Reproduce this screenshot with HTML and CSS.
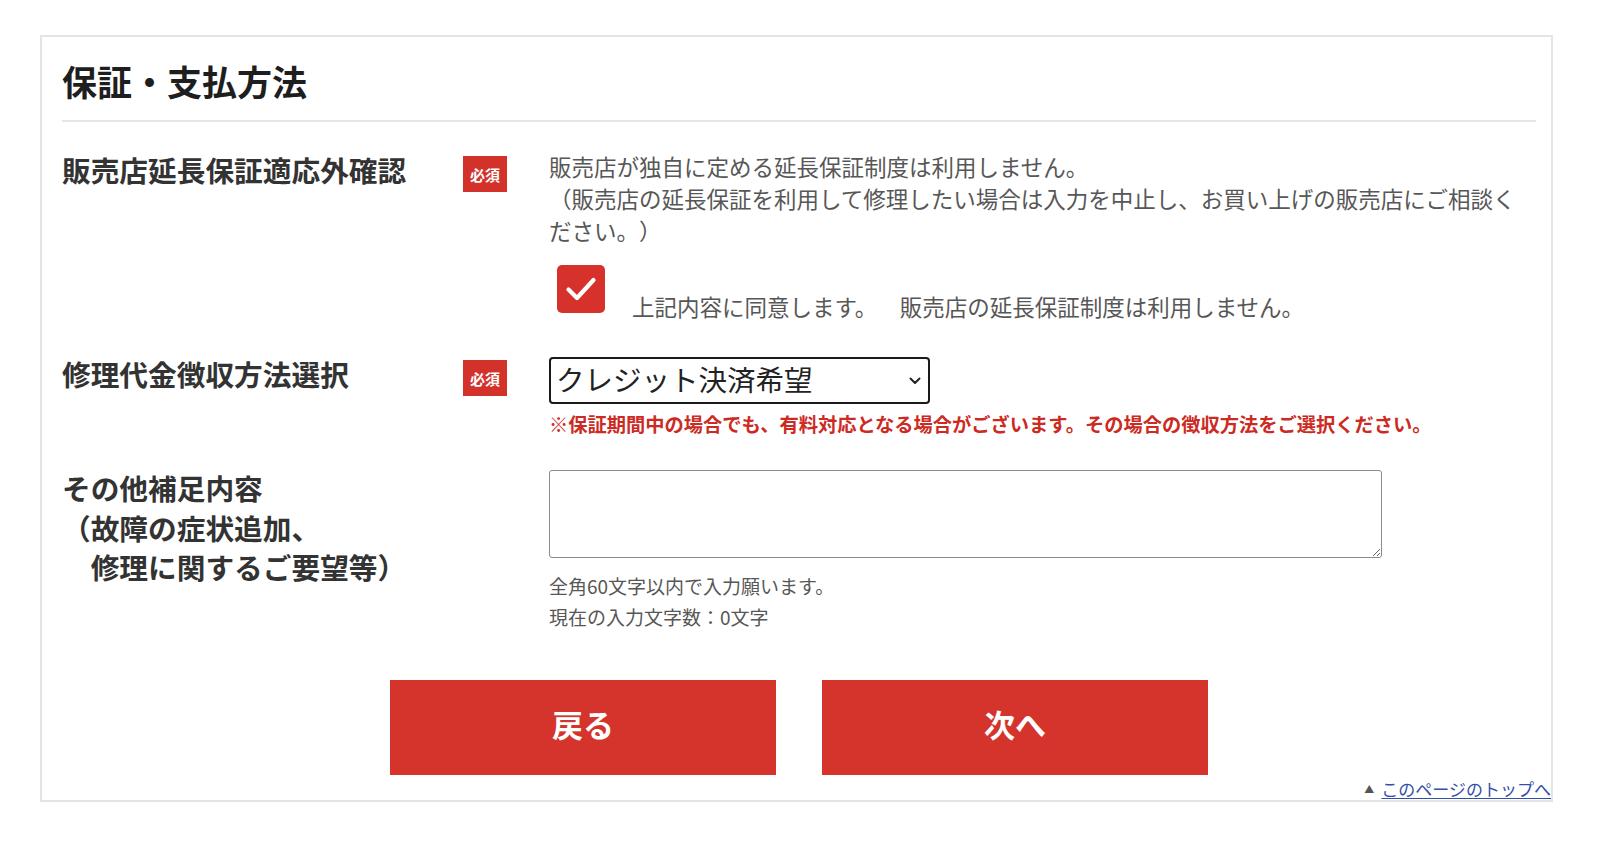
FILE: index.html
```html
<!DOCTYPE html>
<html lang="ja">
<head>
<meta charset="utf-8">
<title>保証・支払方法</title>
<link rel="stylesheet" href="styles.css">
</head>
<body>
<section class="panel">
  <h2 class="panel-title">保証・支払方法</h2>

  <div class="form-row row-warranty">
    <div class="label">販売店延長保証適応外確認</div>
    <div class="badge-cell"><span class="badge">必須</span></div>
    <div class="field">
      <p class="desc">販売店が独自に定める延長保証制度は利用しません。<br>（販売店の延長保証を利用して修理したい場合は入力を中止し、お買い上げの販売店にご相談ください。）</p>
      <label class="agree">
        <span class="checkbox">
          <svg viewBox="0 0 48 48" width="48" height="48" aria-hidden="true">
            <path d="M11.5 24.5 L20 33 L36.5 15" fill="none" stroke="#fff" stroke-width="4.2" stroke-linecap="round" stroke-linejoin="round"/>
          </svg>
        </span>
        <span class="agree-text">上記内容に同意します。　販売店の延長保証制度は利用しません。</span>
      </label>
    </div>
  </div>

  <div class="form-row row-payment">
    <div class="label">修理代金徴収方法選択</div>
    <div class="badge-cell"><span class="badge">必須</span></div>
    <div class="field">
      <div class="select-wrap">
        <select class="select">
          <option>クレジット決済希望</option>
        </select>
        <svg class="select-arrow" viewBox="0 0 12 8" width="12" height="8" aria-hidden="true">
          <path d="M1.5 1.5 L6 6 L10.5 1.5" fill="none" stroke="#222" stroke-width="2" stroke-linecap="round" stroke-linejoin="round"/>
        </svg>
      </div>
      <p class="note">※保証期間中の場合でも、有料対応となる場合がございます。その場合の徴収方法をご選択ください。</p>
    </div>
  </div>

  <div class="form-row row-other">
    <div class="label">その他補足内容<br>（故障の症状追加、<br>　修理に関するご要望等）</div>
    <div class="badge-cell"></div>
    <div class="field">
      <textarea class="textarea"></textarea>
      <p class="hint">全角60文字以内で入力願います。<br>現在の入力文字数：0文字</p>
    </div>
  </div>

  <div class="actions">
    <button class="btn" type="button">戻る</button>
    <button class="btn" type="button">次へ</button>
  </div>

  <div class="pagetop"><span class="pagetop-mark">▲</span><a class="pagetop-link" href="#">このページのトップへ</a></div>
</section>
</body>
</html>
```

FILE: styles.css
```css
* {
  box-sizing: border-box;
}

html, body {
  margin: 0;
  padding: 0;
  background: #ffffff;
}

body {
  font-family: "Noto Sans CJK JP", "Noto Sans", "Liberation Sans", sans-serif;
  color: #333333;
  text-spacing-trim: space-all;
}

.panel {
  width: 1513px;
  margin: 35px 0 0 40px;
  border: 2px solid #e3e3e8;
  padding: 20px 15px 0 20px;
}

.panel-title {
  margin: 0;
  padding: 0 0 15px 0;
  font-size: 35px;
  line-height: 48px;
  font-weight: 700;
  color: #1e1e1e;
  border-bottom: 2px solid #e6e6ea;
}

.form-row {
  display: grid;
  grid-template-columns: 401px 86px 1fr;
  align-items: start;
}

.row-warranty {
  margin-top: 28px;
}

.row-payment {
  margin-top: 32px;
}

.row-other {
  margin-top: 30px;
}

.label {
  font-size: 28.7px;
  line-height: 39.5px;
  font-weight: 700;
  color: #333333;
}

.badge-cell {
  padding-top: 6px;
}

.badge {
  display: flex;
  align-items: center;
  justify-content: center;
  width: 44px;
  height: 36px;
  background: #d3322b;
  color: #ffffff;
  font-size: 15px;
  font-weight: 700;
  line-height: 1;
}

.field {
  min-width: 0;
}

.desc {
  margin: 0;
  font-size: 22.5px;
  line-height: 32px;
  color: #575757;
}

.agree {
  display: flex;
  align-items: flex-start;
  margin-top: 19px;
  padding-left: 8px;
}

.checkbox {
  display: block;
  width: 48px;
  height: 48px;
  border-radius: 5px;
  background: #d6322b;
}

.checkbox svg {
  display: block;
}

.agree-text {
  margin: 25px 0 0 27px;
  font-size: 22.5px;
  line-height: 32px;
  color: #575757;
}

.select-wrap {
  position: relative;
  width: 381px;
  margin-top: 3px;
}

.select {
  appearance: none;
  -webkit-appearance: none;
  display: block;
  width: 381px;
  height: 47px;
  margin: 0;
  padding: 0 30px 4px 5px;
  border: 2px solid #1a1a1a;
  border-radius: 4px;
  background: #ffffff;
  font-family: "Noto Sans CJK JP", "Noto Sans", sans-serif;
  font-size: 28.5px;
  line-height: 39px;
  color: #222222;
}

.select-arrow {
  position: absolute;
  left: 360px;
  top: 20px;
}

.note {
  margin: 6px 0 0 0;
  font-size: 19.25px;
  line-height: 28px;
  font-weight: 700;
  color: #cc2b24;
  white-space: nowrap;
}

.textarea {
  display: block;
  width: 833px;
  height: 88px;
  margin: 2px 0 0 0;
  border: 1px solid #8c8c8c;
  border-radius: 3px;
  background: #ffffff;
  font-family: "Noto Sans CJK JP", "Noto Sans", sans-serif;
  font-size: 18px;
}

.hint {
  margin: 11.5px 0 0 0;
  font-size: 19px;
  line-height: 31px;
  color: #575757;
}

.actions {
  display: flex;
  justify-content: center;
  gap: 46px;
  margin-top: 48.5px;
}

.btn {
  width: 386px;
  height: 95px;
  margin: 0;
  padding: 0 0 8px 0;
  border: none;
  border-radius: 0;
  background: #d4342c;
  color: #ffffff;
  font-family: "Noto Sans CJK JP", "Noto Sans", sans-serif;
  font-size: 31px;
  font-weight: 700;
  cursor: pointer;
}

.pagetop {
  display: flex;
  justify-content: flex-end;
  align-items: center;
  gap: 7px;
  margin: 4px -15px 1px 0;
  height: 20px;
  line-height: 20px;
}

.pagetop-mark {
  font-size: 10px;
  color: #555555;
}

.pagetop-link {
  font-size: 17px;
  color: #3350a6;
  text-decoration: underline;
  text-underline-offset: 2px;
}
```
